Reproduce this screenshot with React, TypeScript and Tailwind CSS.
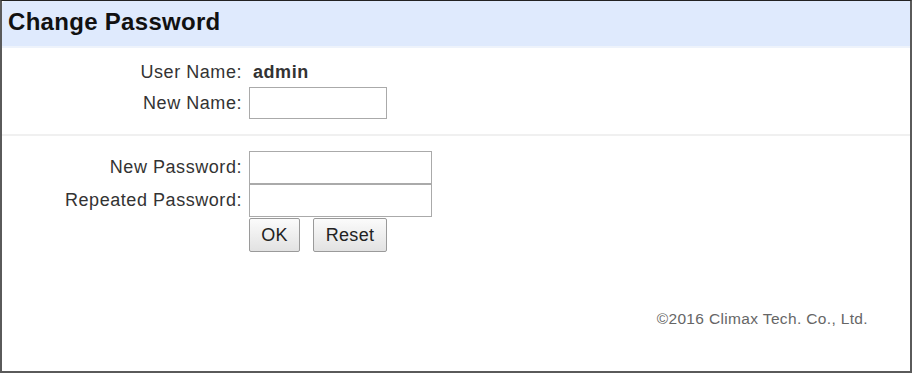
import React from "react";

export default function App() {
  const font = { fontFamily: '"Liberation Sans", Arial, sans-serif' };
  return (
    <div
      className="w-[912px] h-[373px] bg-white border-t border-t-[#222] border-l-2 border-r-2 border-b-2 border-[#5a5a5a] flex flex-col"
      style={font}
    >
      {/* Header */}
      <div className="h-[45px] bg-[#dfeafd] rounded-tl-[4px] flex items-center pl-[6px] pb-[4px]">
        <h1 className="text-[24px] font-bold text-[#111] tracking-[0.3px]">Change Password</h1>
      </div>
      <div className="h-[2px] bg-[#eef3fb]" />

      {/* User name block */}
      <div className="grid grid-cols-[240px_auto] gap-x-[7px] items-center pt-[11px] pb-[15px] text-[18px] text-[#333] tracking-[0.55px]">
        <div className="text-right h-[26px] leading-[26px]">User Name:</div>
        <div className="font-bold h-[26px] leading-[26px] pl-[4px] text-[#333]">admin</div>
        <div className="text-right pt-[2px]">New Name:</div>
        <input type="text" className="w-[138px] h-[32px] border border-[#aaa] bg-white outline-none mt-[2px]" />
      </div>
      <div className="h-[2px] bg-[#f0f0f0]" />

      {/* Password block */}
      <div className="grid grid-cols-[240px_auto] gap-x-[7px] items-center pt-[15px] text-[18px] text-[#333] tracking-[0.55px]">
        <div className="text-right">New Password:</div>
        <input type="password" className="w-[183px] h-[33px] border border-[#aaa] bg-white outline-none" />
        <div className="text-right">Repeated Password:</div>
        <input type="password" className="w-[183px] h-[33px] border border-[#aaa] bg-white outline-none" />
        <div />
        <div className="flex gap-[13px] pt-[1px]">
          <button className="w-[51px] h-[34px] border border-[#9a9a9a] rounded-[2px] bg-gradient-to-b from-[#fbfbfb] to-[#e2e2e2] text-[18px] text-[#222] tracking-[0.3px]">
            OK
          </button>
          <button className="w-[74px] h-[34px] border border-[#9a9a9a] rounded-[2px] bg-gradient-to-b from-[#fbfbfb] to-[#e2e2e2] text-[18px] text-[#222] tracking-[0.3px]">
            Reset
          </button>
        </div>
      </div>

      {/* Footer */}
      <div className="flex-1 flex items-end justify-end pr-[42px] pb-[41px]">
        <span className="text-[15.5px] text-[#666] tracking-[0.35px]">©2016 Climax Tech. Co., Ltd.</span>
      </div>
    </div>
  );
}
